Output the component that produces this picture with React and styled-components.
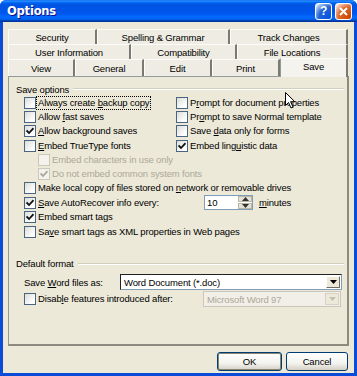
import React from 'react';
import styled, { createGlobalStyle } from 'styled-components';

const GlobalStyle = createGlobalStyle`
    html, body {
        margin: 0;
        padding: 0;
        background: #fff;
    }
    body {
        font-family: "Liberation Sans", Arial, sans-serif;
        font-size: 9.5px;
        letter-spacing: -0.15px;
        color: #000;
    }
`;

const Window = styled.div`
    width: 357px;
    height: 376px;
    box-sizing: border-box;
    display: flex;
    flex-direction: column;
    background: #0a4bd8;
    padding: 0 3px 3px;
    border-radius: 6px 6px 0 0;
    overflow: hidden;
`;

const TitleBar = styled.div`
    height: 22px;
    margin: 0 -3px;
    padding: 0 5px 0 7px;
    display: flex;
    align-items: center;
    gap: 3px;
    background: linear-gradient(#0058ee 0%, #3593ff 4%, #288eff 6%, #127dff 8%, #036ffc 10%, #0262ee 14%, #0057e5 20%, #0054e3 24%, #0055eb 56%, #005bf5 66%, #026afe 76%, #0062ef 86%, #0052d6 92%, #0040ab 94%, #003092 100%);
`;

const Title = styled.div`
    flex: 1;
    color: #fff;
    font-family: "DejaVu Sans", "Liberation Sans", sans-serif;
    font-weight: bold;
    font-size: 11.5px;
    letter-spacing: -0.2px;
    text-shadow: 1px 1px #0f1089;
`;

const CaptionButton = styled.div`
    width: 17px;
    height: 17px;
    box-sizing: border-box;
    border: 1px solid #fff;
    border-radius: 3px;
    display: flex;
    align-items: center;
    justify-content: center;
    color: #fff;
    font-weight: bold;
    font-size: 12px;
    background: ${p => p.$variant === 'close'
        ? 'radial-gradient(circle at 90% 90%, #cc4600 0%, #dc6527 55%, #ffffff 100%)'
        : 'radial-gradient(circle at 90% 90%, #0054e9 0%, #2263d5 55%, #ffffff 100%)'};
`;

const Body = styled.div`
    flex: 1;
    background: #ece9d8;
    padding: 7px 5px 2px 5px;
    display: flex;
    flex-direction: column;
    position: relative;
`;

const TabRow = styled.div`
    display: flex;
    height: ${p => p.$h}px;
    align-items: flex-end;
`;

const Tab = styled.div`
    box-sizing: border-box;
    height: ${p => (p.$active ? '19px' : '100%')};
    display: flex;
    align-items: center;
    justify-content: center;
    background: ${p => (p.$active ? '#f4f3ee' : '#efede3')};
    border-top: 1px solid #fcfcfa;
    border-left: 1px solid ${p => (p.$active ? '#919b9c' : '#fcfcfa')};
    border-right: 2px solid #7b7a72;
    margin-bottom: ${p => (p.$active ? '-1px' : '0')};
    position: relative;
    z-index: ${p => (p.$active ? 1 : 0)};
    padding-bottom: ${p => (p.$active ? '3px' : '0')};
    white-space: nowrap;
`;

const Panel = styled.div`
    height: 270px;
    box-sizing: border-box;
    border: 1px solid #919b9c;
    border-bottom: 2px solid #8d8b80;
    border-right: 2px solid #8d8b80;
    background: #ece9d8;
    padding: 6px 0 0 15px;
    display: flex;
    flex-direction: column;
`;

const GroupHeader = styled.div`
    display: flex;
    align-items: center;
    gap: 4px;
    height: 12px;
    margin-left: -8px;
    margin-right: 3px;
    margin-top: ${p => p.$top || 0}px;
    &:after {
        content: '';
        flex: 1;
        border-top: 1px solid #d0d0bf;
        border-bottom: 1px solid #fff;
    }
`;

const TwoCol = styled.div`
    display: grid;
    grid-template-columns: 152px 1fr;
    margin-top: 1px;
`;

const CheckRow = styled.div`
    display: flex;
    align-items: center;
    height: ${p => p.$h || 14.2}px;
    padding-left: ${p => p.$indent || 0}px;
    color: ${p => (p.$disabled ? '#aca899' : '#000')};
    white-space: nowrap;
`;

const Box = styled.span`
    width: 12px;
    height: 12px;
    box-sizing: border-box;
    flex: none;
    border: 1px solid ${p => (p.$disabled ? '#cac8bb' : '#4a6582')};
    background: ${p => (p.$disabled ? '#f3f2ec' : 'linear-gradient(135deg, #dcdcd7 0%, #fff 80%)')};
    margin-right: 1px;
    display: flex;
    align-items: center;
    justify-content: center;
`;

const Label = styled.span`
    padding: 0 1px;
    outline: ${p => (p.$focus ? '1px dotted #000' : 'none')};
    line-height: 12px;
`;

const FieldLabel = styled.span`
    width: ${p => p.$w}px;
    flex: none;
    display: flex;
    align-items: center;
`;

const Spinner = styled.div`
    display: flex;
    width: 49px;
    height: 15px;
    box-sizing: border-box;
    border: 1px solid #7f9db9;
    background: #fff;
    margin-right: 5px;
`;

const SpinText = styled.div`
    flex: 1;
    padding-left: 2px;
    line-height: 13px;
`;

const SpinButtons = styled.div`
    width: 14px;
    display: flex;
    flex-direction: column;
    gap: 1px;
    background: #fff;
`;

const SpinButton = styled.div`
    flex: 1;
    background: #e4e2d6;
    border: 1px solid #b9b6a6;
    display: flex;
    align-items: center;
    justify-content: center;
`;

const SelectRow = styled.div`
    display: flex;
    align-items: center;
    height: 17px;
    margin-top: ${p => p.$top || 0}px;
`;

const Select = styled.div`
    width: ${p => p.$w}px;
    height: 16px;
    box-sizing: border-box;
    border: 1px solid ${p => (p.$disabled ? '#c9c7ba' : '#7f9db9')};
    border-left: 1px solid ${p => (p.$disabled ? '#c9c7ba' : '#222')};
    border-top: 1px solid ${p => (p.$disabled ? '#c9c7ba' : '#222')};
    background: ${p => (p.$disabled ? '#f1efe7' : '#fff')};
    color: ${p => (p.$disabled ? '#aca899' : '#000')};
    display: flex;
    align-items: center;
    padding-left: 3px;
`;

const SelectText = styled.span`
    flex: 1;
`;

const DropButton = styled.div`
    width: 14px;
    height: 12px;
    margin-right: 1px;
    background: #ece9d8;
    border: 1px solid ${p => (p.$disabled ? '#d6d3c6' : '#fff')};
    border-right-color: ${p => (p.$disabled ? '#d6d3c6' : '#716f64')};
    border-bottom-color: ${p => (p.$disabled ? '#d6d3c6' : '#716f64')};
    box-sizing: border-box;
    display: flex;
    align-items: center;
    justify-content: center;
`;

const ButtonBar = styled.div`
    display: flex;
    justify-content: flex-end;
    gap: 4px;
    margin-top: 6px;
    padding-right: 1px;
`;

const Button = styled.div`
    width: ${p => p.$w}px;
    height: 19px;
    box-sizing: border-box;
    border: 1px solid #003c74;
    border-radius: 3px;
    background: linear-gradient(#ffffff 0%, #f3f3ef 60%, #d6d0c5 100%);
    box-shadow: ${p => (p.$default ? 'inset 0 0 0 1px #8a8670' : 'none')};
    display: flex;
    align-items: center;
    justify-content: center;
`;

const Cursor = styled.svg`
    position: absolute;
    left: 282px;
    top: 70px;
`;

const Check = ({ color }) => (
    <svg width="8" height="8" viewBox="0 0 8 8">
        <path d="M0.5 3.5 L3 6 L7.5 1.2" stroke={color} strokeWidth="1.8" fill="none" />
    </svg>
);

const Arrow = ({ dir, color }) => (
    <svg width="7" height="4" viewBox="0 0 7 4">
        <path d={dir === 'up' ? 'M0 4 L3.5 0 L7 4 Z' : 'M0 0 L7 0 L3.5 4 Z'} fill={color} />
    </svg>
);

const U = styled.u`
    text-decoration: underline;
`;

function Option({ checked, disabled, indent, focus, children, h }) {
    return (
        <CheckRow $indent={indent} $disabled={disabled} $h={h}>
            <Box $disabled={disabled}>
                {checked && <Check color={disabled ? '#aca899' : '#111'} />}
            </Box>
            <Label $focus={focus}>{children}</Label>
        </CheckRow>
    );
}

const tabRows = [
    { h: 15, tabs: [['Security', 89], ['Spelling & Grammar', 133], ['Track Changes', 118]] },
    { h: 15, tabs: [['User Information', 123], ['Compatibility', 106], ['File Locations', 111]] },
    { h: 17, tabs: [['View', 67], ['General', 69], ['Edit', 68], ['Print', 68], ['Save', 68]] },
];

export default function App() {
    return (
        <>
            <GlobalStyle />
            <Window>
                <TitleBar>
                    <Title>Options</Title>
                    <CaptionButton $variant="help">?</CaptionButton>
                    <CaptionButton $variant="close">
                        <svg width="9" height="9" viewBox="0 0 9 9">
                            <path d="M1 1 L8 8 M8 1 L1 8" stroke="#fff" strokeWidth="2" />
                        </svg>
                    </CaptionButton>
                </TitleBar>
                <Body>
                    {tabRows.map((row, i) => (
                        <TabRow key={i} $h={row.h}>
                            {row.tabs.map(([name, w]) => (
                                <Tab key={name} $active={name === 'Save'} style={{ width: w }}>{name}</Tab>
                            ))}
                        </TabRow>
                    ))}
                    <Panel>
                        <GroupHeader>Save options</GroupHeader>
                        <TwoCol>
                            <Option focus>Always create <U>b</U>ackup copy</Option>
                            <Option>P<U>r</U>ompt for document properties</Option>
                            <Option>Allow <U>f</U>ast saves</Option>
                            <Option>Pr<U>o</U>mpt to save Normal template</Option>
                            <Option checked><U>A</U>llow background saves</Option>
                            <Option>Save <U>d</U>ata only for forms</Option>
                            <Option><U>E</U>mbed TrueType fonts</Option>
                            <Option checked>Embed ling<U>u</U>istic data</Option>
                        </TwoCol>
                        <Option disabled indent={14}>Embed characters in use only</Option>
                        <Option disabled checked indent={14}>Do not embed common system fonts</Option>
                        <Option>Make local copy of files stored on <U>n</U>etwork or removable drives</Option>
                        <CheckRow $h={15}>
                            <FieldLabel $w={180}>
                                <Box><Check color="#111" /></Box>
                                <Label><U>S</U>ave AutoRecover info every:</Label>
                            </FieldLabel>
                            <Spinner>
                                <SpinText>10</SpinText>
                                <SpinButtons>
                                    <SpinButton><Arrow dir="up" color="#333" /></SpinButton>
                                    <SpinButton><Arrow dir="down" color="#333" /></SpinButton>
                                </SpinButtons>
                            </Spinner>
                            <Label><U>m</U>inutes</Label>
                        </CheckRow>
                        <Option checked>Embed smart tags</Option>
                        <Option>Sa<U>v</U>e smart tags as XML properties in Web pages</Option>
                        <GroupHeader $top={19}>Default format</GroupHeader>
                        <SelectRow $top={4}>
                            <FieldLabel $w={96}>
                                <span>Save <U>W</U>ord files as:</span>
                            </FieldLabel>
                            <Select $w={222}>
                                <SelectText>Word Document (*.doc)</SelectText>
                                <DropButton><Arrow dir="down" color="#000" /></DropButton>
                            </Select>
                        </SelectRow>
                        <SelectRow>
                            <FieldLabel $w={179}>
                                <Box />
                                <Label>Disab<U>l</U>e features introduced after:</Label>
                            </FieldLabel>
                            <Select $w={138} $disabled>
                                <SelectText>Microsoft Word 97</SelectText>
                                <DropButton $disabled><Arrow dir="down" color="#c3c0b2" /></DropButton>
                            </Select>
                        </SelectRow>
                    </Panel>
                    <ButtonBar>
                        <Button $w={65} $default>OK</Button>
                        <Button $w={62}>Cancel</Button>
                    </ButtonBar>
                    <Cursor width="11" height="17" viewBox="0 0 11 17">
                        <path d="M0.5 0.5 L0.5 13.5 L3.5 10.5 L6 16 L8 15 L5.6 9.7 L9.8 9.7 Z" fill="#fff" stroke="#000" strokeWidth="1" />
                    </Cursor>
                </Body>
            </Window>
        </>
    );
}
